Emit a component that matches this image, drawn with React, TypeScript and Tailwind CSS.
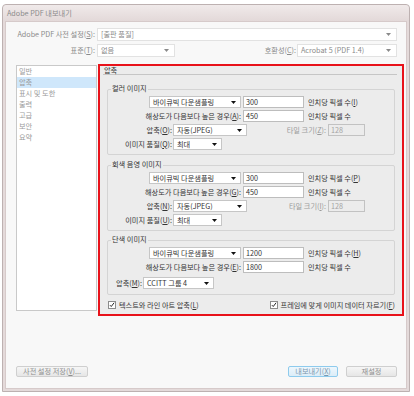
import React from 'react';
import clsx from 'clsx';

function K({ k }: { k: string }) {
  return (
    <>
      (<span className="underline">{k}</span>)
    </>
  );
}

function Arrow({ light }: { light?: boolean }) {
  return (
    <svg width="5" height="3" viewBox="0 0 5 3" className="shrink-0">
      <path d="M0 0h5L2.5 3z" fill={light ? '#8a8a8a' : '#111'} />
    </svg>
  );
}

function Select({ value, className }: { value: string; className?: string }) {
  return (
    <div className={clsx('flex h-[12px] items-center justify-between border border-[#c6c6c6] bg-white pl-[3px] pr-[4px] text-[#333]', className)}>
      <span className="whitespace-nowrap">{value}</span>
      <Arrow />
    </div>
  );
}

function Field({ value, className, disabled }: { value: string; className?: string; disabled?: boolean }) {
  return (
    <div
      className={clsx(
        'flex h-[12px] items-center border px-[2px]',
        disabled ? 'border-[#c2c2c2] bg-[#ececec] text-[#a3a3a3]' : 'border-[#bdbdbd] bg-white text-[#333]',
        className
      )}
    >
      {value}
    </div>
  );
}

function Group({ title, children, className }: { title: string; children: React.ReactNode; className?: string }) {
  return (
    <div className={clsx('rounded-[2px] border border-[#d4d4d4]', className)}>
      <div className="-mt-[6px] ml-[3px] w-fit bg-[#ececec] px-[1px] leading-[9px] text-[#333]">{title}</div>
      <div className="mt-[2px] flex flex-col">{children}</div>
    </div>
  );
}

function ResRow({ left, value, k }: { left: React.ReactNode; value: string; k?: string }) {
  return (
    <div className="flex h-[14px] items-center">
      <div className="flex w-[133px] justify-end whitespace-nowrap">{left}</div>
      <Field value={value} className="ml-[2px] w-[61px]" />
      <span className="ml-[4px] whitespace-nowrap">
        인치당 픽셀 수{k && <K k={k} />}
      </span>
    </div>
  );
}

function Check({ label, k }: { label: string; k: string }) {
  return (
    <div className="flex items-center whitespace-nowrap">
      <span className="flex h-[8px] w-[8px] items-center justify-center border border-[#8c8c8c] bg-white">
        <svg viewBox="0 0 8 8" className="h-[6px] w-[6px]">
          <path d="M1.2 4.2l1.8 1.8 3.8-5" stroke="#222" strokeWidth="1.3" fill="none" />
        </svg>
      </span>
      <span className="ml-[3px]">
        {label}
        <K k={k} />
      </span>
    </div>
  );
}

const menu = ['일반', '압축', '표시 및 도한', '출력', '고급', '보안', '요약'];

export default function App() {
  return (
    <div className="h-[396px] w-[414px] overflow-hidden bg-white pl-[2px] pt-[4px] font-['Noto_Sans_CJK_KR',sans-serif] text-[7.2px] leading-[9px] text-[#333]">
      <div className="flex h-[388px] w-[408px] flex-col rounded-t-[4px] border border-[#bdb1b1] bg-[#e4dada]">
        {/* title bar */}
        <div className="flex h-[16px] items-center rounded-t-[4px] bg-linear-to-b from-[#f0eaea] to-[#e3d9d9] pl-[4px] text-[#8a8a8a]">
          Adobe PDF 내보내기
        </div>

        {/* client */}
        <div className="mx-[2px] mb-[2px] flex flex-1 flex-col border border-[#d6caca] bg-[#f8f8f8]">
          <div className="mt-[6px] flex h-[13px] items-center">
            <div className="w-[89px] text-right text-[#8a8a8a]">
              Adobe PDF 사전 설정<K k="S" />:
            </div>
            <div className="ml-[2px] flex h-[13px] w-[300px] items-center justify-between border border-[#e2e2e2] bg-white pl-[3px] pr-[5px] text-[#8a8a8a]">
              <span>[출판 품질]</span>
              <Arrow light />
            </div>
          </div>
          <div className="mt-[3px] flex h-[13px] items-center">
            <div className="w-[89px] text-right text-[#8a8a8a]">
              표준<K k="T" />:
            </div>
            <div className="ml-[2px] flex h-[13px] w-[78px] items-center justify-between border border-[#e2e2e2] bg-white pl-[3px] pr-[5px] text-[#8a8a8a]">
              <span>없음</span>
              <Arrow light />
            </div>
            <div className="w-[121px] text-right text-[#8a8a8a]">
              호환성<K k="C" />:
            </div>
            <div className="ml-[1px] flex h-[13px] w-[100px] items-center justify-between border border-[#e2e2e2] bg-white pl-[3px] pr-[5px] text-[#8a8a8a]">
              <span>Acrobat 5 (PDF 1.4)</span>
              <Arrow light />
            </div>
          </div>

          {/* main */}
          <div className="mt-[7px] flex items-start">
            <div className="ml-[10px] mt-[1px] h-[246px] w-[81px] border border-[#c9c9c9] bg-white">
              {menu.map((m, i) => (
                <div key={m} className={clsx('h-[11px] pl-[2px] leading-[11px] text-[#9a9a9a]', i === 1 && 'bg-[#cfe7fb]')}>
                  {m}
                </div>
              ))}
            </div>

            <div className="ml-[1px] flex h-[252px] w-[306px] flex-col border-2 border-[#e8121a] bg-[#ececec] px-[7px]">
              <div className="-ml-[4px] -mr-[2px] h-[9px] border-b border-[#c6c6c6] pl-[1px] leading-[8px] text-[#333]">압축</div>

              <Group title="컬러 이미지" className="mt-[14px] pb-[3px]">
                <ResRow left={<Select value="바이큐빅 다운샘플링" className="w-[92px]" />} value="300" k="I" />
                <ResRow left={<span>해상도가 다음보다 높은 경우<K k="A" />:</span>} value="450" />
                <div className="flex h-[14px] items-center">
                  <div className="w-[64px] text-right">압축<K k="O" />:</div>
                  <Select value="자동(JPEG)" className="ml-[1px] w-[74px]" />
                  <div className="w-[79px] text-right text-[#9a9a9a]">타일 크기<K k="Z" />:</div>
                  <Field value="128" disabled className="ml-[2px] w-[37px]" />
                </div>
                <div className="flex h-[14px] items-center">
                  <div className="w-[64px] whitespace-nowrap text-right">이미지 품질<K k="Q" />:</div>
                  <Select value="최대" className="ml-[1px] w-[49px]" />
                </div>
              </Group>

              <Group title="회색 음영 이미지" className="mt-[10px] pb-[3px]">
                <ResRow left={<Select value="바이큐빅 다운샘플링" className="w-[92px]" />} value="300" k="P" />
                <ResRow left={<span>해상도가 다음보다 높은 경우<K k="G" />:</span>} value="450" />
                <div className="flex h-[14px] items-center">
                  <div className="w-[64px] text-right">압축<K k="N" />:</div>
                  <Select value="자동(JPEG)" className="ml-[1px] w-[74px]" />
                  <div className="w-[79px] text-right text-[#9a9a9a]">타일 크기<K k="I" />:</div>
                  <Field value="128" disabled className="ml-[2px] w-[37px]" />
                </div>
                <div className="flex h-[14px] items-center">
                  <div className="w-[64px] whitespace-nowrap text-right">이미지 품질<K k="U" />:</div>
                  <Select value="최대" className="ml-[1px] w-[49px]" />
                </div>
              </Group>

              <Group title="단색 이미지" className="mt-[9px] pb-[4px]">
                <ResRow left={<Select value="바이큐빅 다운샘플링" className="w-[92px]" />} value="1200" k="H" />
                <ResRow left={<span>해상도가 다음보다 높은 경우<K k="E" />:</span>} value="1800" />
                <div className="mt-[2px] flex h-[14px] items-center">
                  <div className="w-[34px] text-right">압축<K k="M" />:</div>
                  <Select value="CCITT 그룹 4" className="ml-[1px] w-[71px]" />
                </div>
              </Group>

              <div className="mt-[5px] flex h-[10px] items-center justify-between pl-[1px]">
                <Check label="텍스트와 라인 아트 압축" k="L" />
                <Check label="프레임에 맞게 이미지 데이터 자르기" k="F" />
              </div>
            </div>
          </div>

          {/* buttons */}
          <div className="mb-[11px] ml-[10px] mr-[9px] mt-auto flex h-[11px] items-center">
            <div className="flex h-[11px] w-[72px] items-center justify-center rounded-[2px] border border-[#cfcfcf] bg-linear-to-b from-[#f6f6f6] to-[#e6e6e6] text-[#8e8e8e]">
              사전 설정 저장<K k="V" />...
            </div>
            <div className="ml-auto flex h-[11px] w-[50px] items-center justify-center rounded-[2px] border border-[#8ecbed] bg-linear-to-b from-[#eef7fd] to-[#dcedf8] text-[#7d97ad]">
              내보내기<K k="X" />
            </div>
            <div className="ml-[8px] flex h-[11px] w-[51px] items-center justify-center rounded-[2px] border border-[#cfcfcf] bg-linear-to-b from-[#f6f6f6] to-[#e6e6e6] text-[#8e8e8e]">
              재설정
            </div>
          </div>
        </div>
      </div>
    </div>
  );
}
